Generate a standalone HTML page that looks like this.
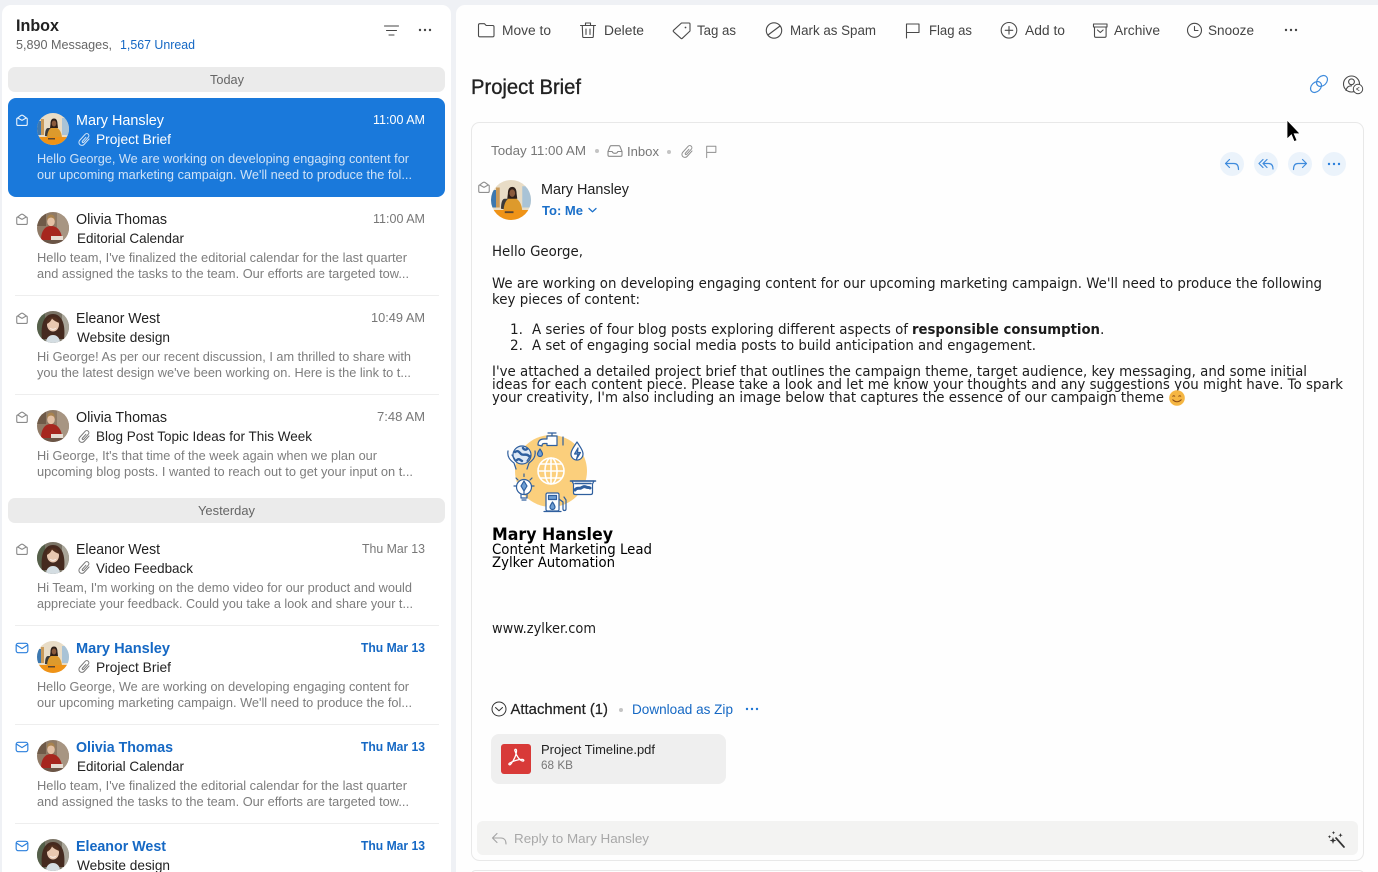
<!DOCTYPE html>
<html lang="en"><head><meta charset="utf-8"><title>Inbox</title>
<style>
html,body{margin:0;padding:0;width:1378px;height:872px;overflow:hidden;background:#eff1f5}
svg{display:block}
text{font-family:"Liberation Sans",sans-serif;white-space:pre}
.n{font-size:15px;fill:#1f1f1f}
.nb{font-size:15px;fill:#1568c4;font-weight:700}
.t{font-size:13px;fill:#777}
.tb{font-size:13px;fill:#1568c4;font-weight:700}
.s{font-size:14px;fill:#222}
.p{font-size:12.5px;fill:#7d7d7d}
.w .n,.w .t,.w .s{fill:#fff}
.w .p{fill:#cfe2f7}
.tool{font-size:13.5px;fill:#444}
.d{font-family:"DejaVu Sans",sans-serif;font-size:14px;fill:#1c1c1c}
.ic{fill:none;stroke:#4a4a4a;stroke-width:1.1;stroke-linecap:round;stroke-linejoin:round}
.lg{fill:none;stroke:#8a8a8a;stroke-width:1.1;stroke-linecap:round;stroke-linejoin:round}
.bl{fill:none;stroke:#3f8bdc;stroke-width:1.2;stroke-linecap:round;stroke-linejoin:round}
.sg{fill:none;stroke:#2f5f9e;stroke-width:1.2;stroke-linecap:round;stroke-linejoin:round}
</style></head><body>
<svg width="1378" height="872" viewBox="0 0 1378 872" xmlns="http://www.w3.org/2000/svg">
<defs>
<clipPath id="c"><circle cx="16" cy="16" r="16"/></clipPath>
<symbol id="mary" viewBox="0 0 32 32"><g clip-path="url(#c)"><rect width="32" height="32" fill="#e8dcc6"/><rect x="0" y="8" width="4" height="14" fill="#3c78b0"/><rect x="4" y="6" width="3" height="16" fill="#c99a5a"/><rect x="25" y="5" width="7" height="17" fill="#a9c3d6"/><path d="M8 23c0-5 1-8 3-8h3v9z" fill="#3a3a3a"/><path d="M10 26c0-8 3-12 7-12s8 4 8 12z" fill="#dd9a2c"/><rect x="0" y="24" width="32" height="8" fill="#ef9317"/><rect x="11" y="25" width="7" height="1.500" fill="#5a4630"/><path d="M13.500 11c0-4 1.500-5.500 3.500-5.500S20.500 7 20.500 11l.5 4h-8z" fill="#2e1f18"/><ellipse cx="17" cy="10.500" rx="2.300" ry="3" fill="#8a5a3c"/></g></symbol>
<symbol id="olivia" viewBox="0 0 32 32"><g clip-path="url(#c)"><rect width="32" height="32" fill="#8f7a66"/><rect x="20" y="0" width="12" height="32" fill="#a79582"/><rect x="0" y="0" width="9" height="14" fill="#6f5a48"/><path d="M4 28c0-9 4-14 10-14s11 5 11 14z" fill="#a6261e"/><ellipse cx="14" cy="9.500" rx="3.800" ry="4.600" fill="#e3c0a4"/><path d="M10 9c-.3-5 2-6.500 4-6.500s4.300 1.500 4 6.500c-.8-2.400-2-3.400-4-3.400S10.800 6.600 10 9z" fill="#a8824f"/><path d="M14 24h12v4H14z" fill="#e6dcd2"/><rect x="0" y="28" width="32" height="4" fill="#6b5546"/></g></symbol>
<symbol id="eleanor" viewBox="0 0 32 32"><g clip-path="url(#c)"><rect width="32" height="32" fill="#7a7466"/><rect x="0" y="0" width="8" height="32" fill="#55604a"/><rect x="25" y="0" width="7" height="32" fill="#a8a498"/><path d="M5 28C3 12 8 3 16 3s13 9 11 25z" fill="#452a1f"/><ellipse cx="16" cy="13.500" rx="6" ry="7" fill="#e8c8b0"/><path d="M9.500 13c0-5 3-7 7-7 3 0 5 2 6 6-3-1-6-2.500-7.500-4.500-1 2.500-3 4.500-5.500 5.500z" fill="#52301f"/><path d="M12.500 16.500c2 1.800 5 1.800 7 0-.8 2.800-6.200 2.800-7 0z" fill="#fff"/><path d="M9 32c0-5 3-8 7-8s7 3 7 8z" fill="#d4dde2"/></g></symbol>
<symbol id="env" viewBox="0 0 12 12"><path d="M2 4.500 5 2.200a1.800 1.800 0 0 1 2 0L10 4.500M1.500 5.200c0-.5.400-.9.900-.9l3.600 2 3.600-2c.5 0 .9.400.9.900v4.300c0 .7-.5 1.200-1.200 1.200H2.700c-.7 0-1.200-.5-1.200-1.200z" fill="none" stroke="currentColor" stroke-width=".95" stroke-linejoin="round"/></symbol>
<symbol id="env2" viewBox="0 0 12 12"><rect x="1" y="2" width="10" height="8" rx="1.700" fill="none" stroke="currentColor" stroke-width="1"/><path d="M1.300 3.500 6 6.500l4.700-3" fill="none" stroke="currentColor" stroke-width="1"/></symbol>
<symbol id="clip" viewBox="0 0 15 15"><path transform="translate(7.500 7.500) rotate(42) scale(.86) translate(-6 -9)" d="M9.500 5V13.500a3.500 3.500 0 0 1-7 0V4a2.500 2.500 0 0 1 5 0V12a1 1 0 0 1-2 0V6" fill="none" stroke="currentColor" stroke-width="1.150" stroke-linecap="round"/></symbol>
<symbol id="flag" viewBox="0 0 14 16"><path d="M1.500 15V2h10.500v7H1.500" fill="none" stroke="currentColor" stroke-width="1.100" stroke-linejoin="round" stroke-linecap="round"/></symbol>
</defs>

<rect width="1378" height="872" fill="#eff1f5"/>
<rect x="2" y="5" width="449" height="880" rx="9" fill="#fff"/>
<rect x="456" y="5" width="930" height="880" rx="9" fill="#fefefe"/>

<!-- list header -->
<text x="16" y="31" font-size="16.500" font-weight="700" fill="#222" textLength="43" lengthAdjust="spacingAndGlyphs">Inbox</text>
<text x="16" y="49" font-size="12.500" fill="#666" textLength="96" lengthAdjust="spacingAndGlyphs">5,890 Messages,</text>
<text x="120" y="49" font-size="12.500" fill="#1568c4" textLength="75" lengthAdjust="spacingAndGlyphs">1,567 Unread</text>
<path d="M384.500 26H398.500M386.500 30.500H396.500M389 35H394" fill="none" stroke="#444" stroke-width="1.100" stroke-linecap="round"/>
<g fill="#444"><circle cx="420" cy="30" r="1.200"/><circle cx="425" cy="30" r="1.200"/><circle cx="430" cy="30" r="1.200"/></g>

<rect x="8" y="67" width="437" height="25" rx="7" fill="#ebebeb"/>
<text x="210" y="84" font-size="12.500" fill="#666" textLength="34" lengthAdjust="spacingAndGlyphs">Today</text>

<rect x="8" y="98" width="437" height="99" rx="8" fill="#1a79db"/>

<!-- row 1 -->
<g class="w">
<use href="#env" x="15" y="113" width="14" height="14" color="#e8f2fc"/>
<use href="#mary" x="37" y="113" width="32" height="32"/>
<text class="n" x="76" y="125" textLength="88" lengthAdjust="spacingAndGlyphs">Mary Hansley</text>
<text class="t" x="373" y="124" textLength="52" lengthAdjust="spacingAndGlyphs">11:00 AM</text>
<use href="#clip" x="77" y="132" width="15" height="15" color="#d5e6f8"/>
<text class="s" x="96" y="144" textLength="75" lengthAdjust="spacingAndGlyphs">Project Brief</text>
<text class="p" x="37" y="163" textLength="372" lengthAdjust="spacingAndGlyphs">Hello George, We are working on developing engaging content for</text>
<text class="p" x="37" y="179" textLength="375" lengthAdjust="spacingAndGlyphs">our upcoming marketing campaign. We'll need to produce the fol...</text>
</g>

<!-- row 2 -->
<use href="#env" x="15" y="212" width="14" height="14" color="#8a8a8a"/>
<use href="#olivia" x="37" y="212" width="32" height="32"/>
<text class="n" x="76" y="224" textLength="91" lengthAdjust="spacingAndGlyphs">Olivia Thomas</text>
<text class="t" x="373" y="223" textLength="52" lengthAdjust="spacingAndGlyphs">11:00 AM</text>
<text class="s" x="77" y="243" textLength="107" lengthAdjust="spacingAndGlyphs">Editorial Calendar</text>
<text class="p" x="37" y="262" textLength="370" lengthAdjust="spacingAndGlyphs">Hello team, I've finalized the editorial calendar for the last quarter</text>
<text class="p" x="37" y="278" textLength="372" lengthAdjust="spacingAndGlyphs">and assigned the tasks to the team. Our efforts are targeted tow...</text>
<rect x="15" y="295" width="424" height="1" fill="#eeeeee"/>

<!-- row 3 -->
<use href="#env" x="15" y="311" width="14" height="14" color="#8a8a8a"/>
<use href="#eleanor" x="37" y="311" width="32" height="32"/>
<text class="n" x="76" y="323" textLength="84" lengthAdjust="spacingAndGlyphs">Eleanor West</text>
<text class="t" x="371" y="322" textLength="54" lengthAdjust="spacingAndGlyphs">10:49 AM</text>
<text class="s" x="77" y="342" textLength="93" lengthAdjust="spacingAndGlyphs">Website design</text>
<text class="p" x="37" y="361" textLength="374" lengthAdjust="spacingAndGlyphs">Hi George! As per our recent discussion, I am thrilled to share with</text>
<text class="p" x="37" y="377" textLength="374" lengthAdjust="spacingAndGlyphs">you the latest design we've been working on. Here is the link to t...</text>
<rect x="15" y="394" width="424" height="1" fill="#eeeeee"/>

<!-- row 4 -->
<use href="#env" x="15" y="410" width="14" height="14" color="#8a8a8a"/>
<use href="#olivia" x="37" y="410" width="32" height="32"/>
<text class="n" x="76" y="422" textLength="91" lengthAdjust="spacingAndGlyphs">Olivia Thomas</text>
<text class="t" x="377" y="421" textLength="48" lengthAdjust="spacingAndGlyphs">7:48 AM</text>
<use href="#clip" x="77" y="429" width="15" height="15" color="#777"/>
<text class="s" x="96" y="441" textLength="216" lengthAdjust="spacingAndGlyphs">Blog Post Topic Ideas for This Week</text>
<text class="p" x="37" y="460" textLength="340" lengthAdjust="spacingAndGlyphs">Hi George, It's that time of the week again when we plan our</text>
<text class="p" x="37" y="476" textLength="376" lengthAdjust="spacingAndGlyphs">upcoming blog posts. I wanted to reach out to get your input on t...</text>

<rect x="8" y="498" width="437" height="25" rx="7" fill="#ebebeb"/>
<text x="198" y="515" font-size="12.500" fill="#666" textLength="57" lengthAdjust="spacingAndGlyphs">Yesterday</text>

<!-- row 5 -->
<use href="#env" x="15" y="542" width="14" height="14" color="#8a8a8a"/>
<use href="#eleanor" x="37" y="542" width="32" height="32"/>
<text class="n" x="76" y="554" textLength="84" lengthAdjust="spacingAndGlyphs">Eleanor West</text>
<text class="t" x="362" y="553" textLength="63" lengthAdjust="spacingAndGlyphs">Thu Mar 13</text>
<use href="#clip" x="77" y="560" width="15" height="15" color="#777"/>
<text class="s" x="96" y="573" textLength="97" lengthAdjust="spacingAndGlyphs">Video Feedback</text>
<text class="p" x="37" y="592" textLength="375" lengthAdjust="spacingAndGlyphs">Hi Team, I'm working on the demo video for our product and would</text>
<text class="p" x="37" y="608" textLength="376" lengthAdjust="spacingAndGlyphs">appreciate your feedback. Could you take a look and share your t...</text>
<rect x="15" y="625" width="424" height="1" fill="#eeeeee"/>

<!-- row 6 -->
<use href="#env2" x="15" y="641" width="14" height="14" color="#2a7fdc"/>
<use href="#mary" x="37" y="641" width="32" height="32"/>
<text class="nb" x="76" y="653" textLength="94" lengthAdjust="spacingAndGlyphs">Mary Hansley</text>
<text class="tb" x="361" y="652" textLength="64" lengthAdjust="spacingAndGlyphs">Thu Mar 13</text>
<use href="#clip" x="77" y="659" width="15" height="15" color="#777"/>
<text class="s" x="96" y="672" textLength="75" lengthAdjust="spacingAndGlyphs">Project Brief</text>
<text class="p" x="37" y="691" textLength="372" lengthAdjust="spacingAndGlyphs">Hello George, We are working on developing engaging content for</text>
<text class="p" x="37" y="707" textLength="375" lengthAdjust="spacingAndGlyphs">our upcoming marketing campaign. We'll need to produce the fol...</text>
<rect x="15" y="724" width="424" height="1" fill="#eeeeee"/>

<!-- row 7 -->
<use href="#env2" x="15" y="740" width="14" height="14" color="#2a7fdc"/>
<use href="#olivia" x="37" y="740" width="32" height="32"/>
<text class="nb" x="76" y="752" textLength="97" lengthAdjust="spacingAndGlyphs">Olivia Thomas</text>
<text class="tb" x="361" y="751" textLength="64" lengthAdjust="spacingAndGlyphs">Thu Mar 13</text>
<text class="s" x="77" y="771" textLength="107" lengthAdjust="spacingAndGlyphs">Editorial Calendar</text>
<text class="p" x="37" y="790" textLength="370" lengthAdjust="spacingAndGlyphs">Hello team, I've finalized the editorial calendar for the last quarter</text>
<text class="p" x="37" y="806" textLength="372" lengthAdjust="spacingAndGlyphs">and assigned the tasks to the team. Our efforts are targeted tow...</text>
<rect x="15" y="823" width="424" height="1" fill="#eeeeee"/>

<!-- row 8 -->
<use href="#env2" x="15" y="839" width="14" height="14" color="#2a7fdc"/>
<use href="#eleanor" x="37" y="839" width="32" height="32"/>
<text class="nb" x="76" y="851" textLength="90" lengthAdjust="spacingAndGlyphs">Eleanor West</text>
<text class="tb" x="361" y="850" textLength="64" lengthAdjust="spacingAndGlyphs">Thu Mar 13</text>
<text class="s" x="77" y="870" textLength="93" lengthAdjust="spacingAndGlyphs">Website design</text>

<!-- toolbar -->
<path class="ic" d="M478.500 35.500V25c0-.8.600-1.300 1.300-1.300h4.700l1.700 1.800h6.500c.8 0 1.300.6 1.300 1.300v8.700c0 .8-.5 1.300-1.300 1.300h-12.900c-.8 0-1.300-.5-1.300-1.300z"/>
<text class="tool" x="502" y="35" textLength="49" lengthAdjust="spacingAndGlyphs">Move to</text>
<path class="ic" d="M580.500 25.500h15M585.500 25.300V23h5v2.300M582.300 25.500l.4 11c0 .6.500 1 1 1h8.600c.5 0 1-.4 1-1l.4-11M586 29v5.500M590 29v5.500"/>
<text class="tool" x="604" y="35" textLength="40" lengthAdjust="spacingAndGlyphs">Delete</text>
<path class="ic" d="M673.500 30.300 681.500 23h7.500c.6 0 1 .4 1 1v7l-7.700 7.300c-.4.400-1 .4-1.400 0l-7.400-6.600c-.4-.4-.4-1 0-1.400z"/><circle cx="685.500" cy="27.500" r=".9" fill="#4a4a4a"/>
<text class="tool" x="697" y="35" textLength="39" lengthAdjust="spacingAndGlyphs">Tag as</text>
<circle class="ic" cx="774" cy="30.500" r="7.700"/><path class="ic" d="M768 35l12-9"/>
<text class="tool" x="790" y="35" textLength="86" lengthAdjust="spacingAndGlyphs">Mark as Spam</text>
<path class="ic" d="M906.500 38V24h12.500v8.500H906.500"/>
<text class="tool" x="929" y="35" textLength="43" lengthAdjust="spacingAndGlyphs">Flag as</text>
<circle class="ic" cx="1009" cy="30.300" r="7.800"/><path class="ic" d="M1009 26.500v7.600M1005.200 30.300h7.600"/>
<text class="tool" x="1025" y="35" textLength="40" lengthAdjust="spacingAndGlyphs">Add to</text>
<path class="ic" d="M1093.500 24h13.500v3h-13.500zM1094.500 27v9c0 .8.500 1.300 1.300 1.300h9c.8 0 1.300-.5 1.300-1.300v-9M1097.500 30l2.800 2.500 2.800-2.500"/>
<text class="tool" x="1114" y="35" textLength="46" lengthAdjust="spacingAndGlyphs">Archive</text>
<circle class="ic" cx="1194.500" cy="30.300" r="7"/><path class="ic" d="M1194.500 26.500v4h3.500"/>
<text class="tool" x="1208" y="35" textLength="46" lengthAdjust="spacingAndGlyphs">Snooze</text>
<g fill="#444"><circle cx="1286" cy="30" r="1.200"/><circle cx="1291" cy="30" r="1.200"/><circle cx="1296" cy="30" r="1.200"/></g>

<!-- title -->
<text x="471" y="94" font-size="21px" fill="#222" stroke="#222" stroke-width=".35" textLength="110" lengthAdjust="spacingAndGlyphs">Project Brief</text>
<g class="bl"><ellipse cx="1316" cy="87" rx="6.200" ry="4.600" transform="rotate(-45 1316 87)"/><ellipse cx="1322" cy="81" rx="6.200" ry="4.600" transform="rotate(-45 1322 81)"/></g>
<circle class="ic" cx="1351.500" cy="84" r="8"/><circle class="ic" cx="1351.500" cy="81.800" r="2.900"/><path class="ic" d="M1346 90.500c.6-3.300 2.800-4.700 5.500-4.700"/>
<circle cx="1358" cy="89" r="4.700" fill="#fff" stroke="#4a4a4a" stroke-width="1"/><path d="M1356.300 89l3-1.700M1356.300 89l3 1.700" stroke="#4a4a4a" stroke-width=".8" fill="none"/>

<!-- card -->
<rect x="471.500" y="122.500" width="892" height="738" rx="8" fill="#fefefe" stroke="#e8e8e8"/>
<rect x="471.500" y="870.500" width="892" height="10" rx="4" fill="#fefefe" stroke="#e8e8e8"/>

<text x="491" y="155" font-size="13px" fill="#777" textLength="95" lengthAdjust="spacingAndGlyphs">Today 11:00 AM</text>
<circle cx="597" cy="151" r="2" fill="#c4c4c4"/>
<path class="lg" d="M608 151.500v3.500c0 .8.500 1.300 1.300 1.300h11.400c.8 0 1.300-.5 1.300-1.300v-3.500l-2-5c-.2-.5-.6-.8-1.200-.8h-7.600c-.6 0-1 .3-1.200.8zM608 151.500h4.200c.3 1.300 1.300 1.800 2.800 1.800s2.500-.5 2.800-1.800h4.200"/>
<text x="627" y="156" font-size="13px" fill="#777" textLength="32" lengthAdjust="spacingAndGlyphs">Inbox</text>
<circle cx="669" cy="152" r="2" fill="#c4c4c4"/>
<use href="#clip" x="680" y="144" width="15" height="15" color="#8f8f8f"/>
<use href="#flag" x="705" y="144.500" width="13" height="14" color="#8f8f8f"/>

<g fill="#ebf3fb"><circle cx="1232" cy="164" r="12"/><circle cx="1266" cy="164" r="12"/><circle cx="1300" cy="164" r="12"/><circle cx="1334" cy="164" r="12"/></g>
<path class="bl" d="M1225.500 163.500h8.500c3 0 4.500 2 4.500 6M1225.500 163.500l4-4M1225.500 163.500l4 4"/>
<path class="bl" d="M1263 163.500h5.500c3 0 4.500 2 4.500 5.500M1263 163.500l4-4M1263 163.500l4 4M1259 163.500l4-4M1259 163.500l4 4"/>
<path class="bl" d="M1306.500 163.500h-8.500c-3 0-4.500 2-4.500 6M1306.500 163.500l-4-4M1306.500 163.500l-4 4"/>
<g fill="#2a7fdc"><circle cx="1329" cy="164" r="1.200"/><circle cx="1334" cy="164" r="1.200"/><circle cx="1339" cy="164" r="1.200"/></g>

<use href="#env" x="477" y="180" width="14" height="14" color="#8f8f8f"/>
<use href="#mary" x="491" y="180" width="40" height="40"/>
<text x="541" y="194" font-size="14.500" fill="#222" textLength="88" lengthAdjust="spacingAndGlyphs">Mary Hansley</text>
<text x="542" y="215" font-size="13px" font-weight="700" fill="#1a6fc9" textLength="41" lengthAdjust="spacingAndGlyphs">To: Me</text>
<path d="M589 208.500l3.500 3.300 3.500-3.300" fill="none" stroke="#1a6fc9" stroke-width="1.300" stroke-linecap="round" stroke-linejoin="round"/>

<!-- body -->
<text class="d" x="492" y="256" textLength="91" lengthAdjust="spacingAndGlyphs">Hello George,</text>
<text class="d" x="492" y="288" textLength="830" lengthAdjust="spacingAndGlyphs">We are working on developing engaging content for our upcoming marketing campaign. We'll need to produce the following</text>
<text class="d" x="492" y="304" textLength="148" lengthAdjust="spacingAndGlyphs">key pieces of content:</text>
<text class="d" x="510" y="334" textLength="13" lengthAdjust="spacingAndGlyphs">1.</text>
<text class="d" x="532" y="334" textLength="376" lengthAdjust="spacingAndGlyphs">A series of four blog posts exploring different aspects of</text>
<text class="d" x="912" y="334" font-weight="700" textLength="188" lengthAdjust="spacingAndGlyphs">responsible consumption</text>
<text class="d" x="1100" y="334">.</text>
<text class="d" x="510" y="350" textLength="13" lengthAdjust="spacingAndGlyphs">2.</text>
<text class="d" x="532" y="350" textLength="504" lengthAdjust="spacingAndGlyphs">A set of engaging social media posts to build anticipation and engagement.</text>
<text class="d" x="492" y="376" textLength="815" lengthAdjust="spacingAndGlyphs">I've attached a detailed project brief that outlines the campaign theme, target audience, key messaging, and some initial</text>
<text class="d" x="492" y="389" textLength="851" lengthAdjust="spacingAndGlyphs">ideas for each content piece. Please take a look and let me know your thoughts and any suggestions you might have. To spark</text>
<text class="d" x="492" y="402" textLength="672" lengthAdjust="spacingAndGlyphs">your creativity, I'm also including an image below that captures the essence of our campaign theme</text>
<circle cx="1177" cy="398" r="7.800" fill="#f5b642"/><path d="M1172.500 396.500q1.300-1.500 2.500 0M1178.500 396.500q1.300-1.500 2.500 0M1172.500 399.500q4.500 4.500 9 0" fill="none" stroke="#8a4a14" stroke-width="1"/>

<!-- signature graphic -->
<circle cx="551" cy="471" r="36" fill="#fbcf7c"/>
<g fill="none" stroke="#fff" stroke-width="1.600"><circle cx="551" cy="471" r="13"/><ellipse cx="551" cy="471" rx="6" ry="13"/><path d="M538 471h26M540 464h22M540 478h22M551 458v26"/></g>
<g class="sg">
<path d="M538 445c0-4 2-6 6-6h3v-3h10v9.500h-10v-2h-3c-1.500 0-2 1-2 2.500z" fill="#fff"/><path d="M552 436v-3M548 433h8M563 437v8"/>
<path d="M540 449c-2 3-2.500 4-2.500 5a2.500 2.500 0 0 0 5 0c0-1-.5-2-2.500-5z" fill="#6f9fd4"/>
<path d="M577 442c-4 6-6 9-6 12a6 6 0 0 0 12 0c0-3-2-6-6-12z" fill="#fff"/><path d="M578 448l-3.500 6h3.500l-1.500 5 4-6.500h-3z" fill="#6f9fd4"/>
<circle cx="522" cy="455" r="9" fill="#dfe9f5"/><path d="M515 452c3-2 4 0 6 2s5-1 8 2M517 460c2-2 3 0 5 1M523 448c1 2 3 2 4 1" stroke-width="2.400"/><path d="M508 451c-1 6 2 9 6 12l2 6M535 451c1 6-2 9-6 12l-2 6M512 455l4 6M531 455l-4 6"/>
<circle cx="524" cy="487" r="7.500" fill="#fff"/><path d="M524 481l-3 5 3 5 3-5z" fill="#6f9fd4"/><path d="M521 494v4h6v-4M522 500h4M524 491v3M524 474v2.500M514 486h2M532 486h2M516 478l2 2M532 478l-2 2"/>
<rect x="546" y="493" width="13" height="18" rx="1.500" fill="#fff"/><rect x="548.500" y="495.500" width="8" height="4" fill="#6f9fd4"/><path d="M544 511.500h17M559 499l4 3v7c0 2 3 2 3 0v-9l-2-3"/><path d="M552.500 502c-2 3-2.500 4-2.500 5a2.500 2.500 0 0 0 5 0c0-1-.5-2-2.500-5z" fill="#6f9fd4"/>
<path d="M572 481h22l-1.500 3v9c0 1-1 1.500-2 1.500h-15c-1 0-2-.5-2-1.500v-9z" fill="#fff"/><path d="M570.500 481h25M575 483.500h16" stroke-width="1.600"/><path d="M575 490c2-3 4-1 6-2s3-2 5-1 3 0 4 1" stroke-width="3"/>
</g>

<text class="d" x="492" y="540" font-size="17px" font-weight="700" style="font-size:17px;fill:#000" textLength="121" lengthAdjust="spacingAndGlyphs">Mary Hansley</text>
<text class="d" x="492" y="554" style="fill:#000" textLength="160" lengthAdjust="spacingAndGlyphs">Content Marketing Lead</text>
<text class="d" x="492" y="567" style="fill:#000" textLength="123" lengthAdjust="spacingAndGlyphs">Zylker Automation</text>
<text class="d" x="492" y="633" textLength="104" lengthAdjust="spacingAndGlyphs">www.zylker.com</text>

<!-- attachment -->
<circle cx="499" cy="709" r="7" fill="none" stroke="#333" stroke-width="1"/><path d="M495.500 707.500l3.500 3.300 3.500-3.300" fill="none" stroke="#333" stroke-width="1" stroke-linecap="round" stroke-linejoin="round"/>
<text x="510.500" y="714" font-size="14.500" fill="#222" stroke="#222" stroke-width=".2" textLength="97.500" lengthAdjust="spacingAndGlyphs">Attachment (1)</text>
<circle cx="621" cy="710" r="2" fill="#c4c4c4"/>
<text x="632" y="714" font-size="13.500" fill="#1568c4" textLength="101" lengthAdjust="spacingAndGlyphs">Download as Zip</text>
<g fill="#1f76d4"><circle cx="747" cy="709" r="1.200"/><circle cx="752" cy="709" r="1.200"/><circle cx="757" cy="709" r="1.200"/></g>
<rect x="491" y="734" width="235" height="50" rx="8" fill="#efefef"/>
<rect x="501" y="744" width="30" height="30" rx="3" fill="#d83a38"/>
<path d="M515 751c-1-2 1.500-2.500 1.500-.5 0 4-2.500 10-6 14-1.300 1-2.300-.5-1-1.300 3-2 9-4 13-3.800 2 .2 1.500 2.200-.3 1.500-3-1-6-5.500-7.200-9.900z" fill="none" stroke="#fff" stroke-width="1.300" stroke-linejoin="round"/>
<text x="541" y="754" font-size="13px" fill="#222" textLength="114" lengthAdjust="spacingAndGlyphs">Project Timeline.pdf</text>
<text x="541" y="769" font-size="12px" fill="#777" textLength="32" lengthAdjust="spacingAndGlyphs">68 KB</text>

<!-- reply -->
<rect x="477" y="821" width="881" height="34" rx="6" fill="#f3f3f2"/>
<path d="M492.500 838h8.500c3 0 5 2 5 6M492.500 838l4.500-4.500M492.500 838l4.500 4.500" fill="none" stroke="#a3a3a3" stroke-width="1.100" stroke-linecap="round" stroke-linejoin="round"/>
<text x="514" y="843" font-size="13px" fill="#a8a8a8" textLength="135" lengthAdjust="spacingAndGlyphs">Reply to Mary Hansley</text>
<path d="M1336 838l8 9" stroke="#333" stroke-width="1.700" stroke-linecap="round" fill="none"/>
<g fill="#333"><path d="M1333 837l.9 2.600 2.600.9-2.600.9-.9 2.600-.9-2.600-2.600-.9 2.600-.9z"/><path d="M1340.500 833l.6 1.600 1.600.6-1.600.6-.6 1.600-.6-1.600-1.600-.6 1.600-.6z"/><path d="M1329.500 835l.5 1.200 1.200.5-1.200.5-.5 1.200-.5-1.200-1.200-.5 1.200-.5z"/><path d="M1333.500 831l.5 1.200 1.200.5-1.200.5-.5 1.200-.5-1.200-1.200-.5 1.200-.5z"/></g>

<!-- cursor -->
<path d="M1287 120v19l4.400-4.200 2.800 6.800 2.800-1.200-2.800-6.600h6z" fill="#000" stroke="#fff" stroke-width=".8"/>
</svg>
</body></html>
